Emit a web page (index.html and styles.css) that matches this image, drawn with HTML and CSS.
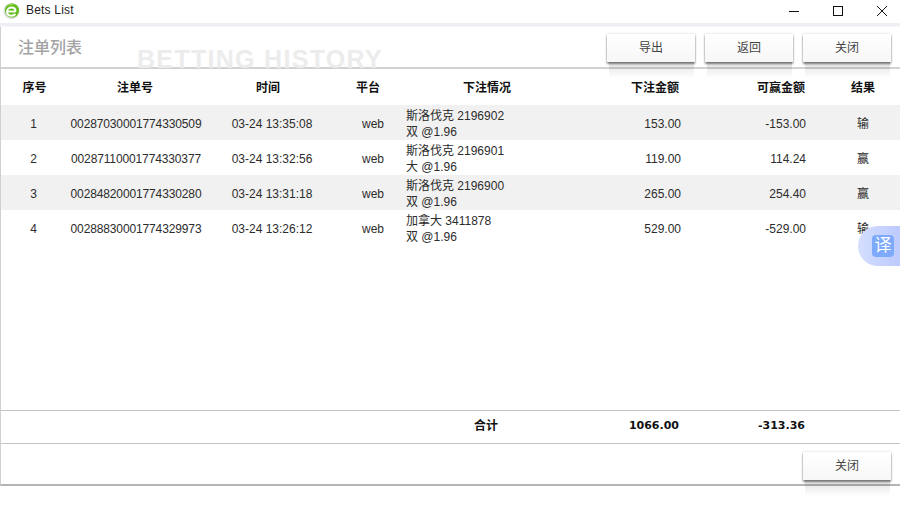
FILE: index.html
```html
<!DOCTYPE html>
<html lang="zh">
<head>
<meta charset="utf-8">
<title>Bets List</title>
<link rel="stylesheet" href="styles.css">
</head>
<body>
<div class="titlebar">
  <svg class="logo" width="17" height="17" viewBox="0 0 17 17">
    <circle cx="8.500" cy="9" r="8" fill="#d9ded6"/>
    <circle cx="9" cy="8.500" r="7" fill="#62bd1a"/>
    <path d="M12 2.500c-1-.6-2-.9-3-.9-2 0-3.700.9-4.800 2.400 2-1 5-1.500 7.800-1.500z" fill="#a8e060"/>
    <path d="M4 9.500h8.800" stroke="#fff" stroke-width="1.800" fill="none"/>
    <path d="M12.500 9.500c0-2.500-1.700-4-3.900-4-2.500 0-4.500 1.800-4.500 4.300 0 2.400 1.900 3.900 4.300 3.900 1.600 0 3-.6 3.900-1.700" stroke="#fff" stroke-width="2" fill="none"/>
  </svg>
  <span class="app-name">Bets List</span>
  <div class="win-controls">
    <svg width="44" height="24" viewBox="0 0 44 24"><path d="M21 11.500h10" stroke="#111" fill="none"/></svg>
    <svg width="44" height="24" viewBox="0 0 44 24"><rect x="21.500" y="6.500" width="9" height="9" stroke="#111" fill="none"/></svg>
    <svg width="44" height="24" viewBox="0 0 44 24"><path d="M21 6l10 10M31 6L21 16" stroke="#111" fill="none"/></svg>
  </div>
</div>
<div class="band"></div>
<main class="panel">
  <header class="panel-head">
    <h1 class="panel-title">注单列表</h1>
    <div class="watermark">BETTING HISTORY</div>
    <div class="actions">
      <button class="btn">导出</button>
      <button class="btn">返回</button>
      <button class="btn">关闭</button>
    </div>
  </header>
  <div class="grid grid-head">
    <div class="c">序号</div>
    <div class="c">注单号</div>
    <div class="c">时间</div>
    <div class="c">平台</div>
    <div class="c">下注情况</div>
    <div class="r">下注金额</div>
    <div class="r">可赢金额</div>
    <div class="c last">结果</div>
  </div>
  <div class="rows">
    <div class="grid row odd">
      <div class="c seq">1</div><div class="c no">00287030001774330509</div><div class="c time">03-24 13:35:08</div><div class="c web">web</div>
      <div class="detail">斯洛伐克 2196902<br>双 @1.96</div>
      <div class="r num">153.00</div><div class="r num win">-153.00</div><div class="c last res">输</div>
    </div>
    <div class="grid row">
      <div class="c seq">2</div><div class="c no">00287110001774330377</div><div class="c time">03-24 13:32:56</div><div class="c web">web</div>
      <div class="detail">斯洛伐克 2196901<br>大 @1.96</div>
      <div class="r num">119.00</div><div class="r num win">114.24</div><div class="c last res">赢</div>
    </div>
    <div class="grid row odd">
      <div class="c seq">3</div><div class="c no">00284820001774330280</div><div class="c time">03-24 13:31:18</div><div class="c web">web</div>
      <div class="detail">斯洛伐克 2196900<br>双 @1.96</div>
      <div class="r num">265.00</div><div class="r num win">254.40</div><div class="c last res">赢</div>
    </div>
    <div class="grid row">
      <div class="c seq">4</div><div class="c no">00288830001774329973</div><div class="c time">03-24 13:26:12</div><div class="c web">web</div>
      <div class="detail">加拿大 3411878<br>双 @1.96</div>
      <div class="r num">529.00</div><div class="r num win">-529.00</div><div class="c last res">输</div>
    </div>
  </div>
  <div class="grid totals">
    <div></div><div></div><div></div><div></div>
    <div class="total-label">合计</div>
    <div class="r total">1066.00</div>
    <div class="r total">-313.36</div>
    <div></div>
  </div>
  <footer class="panel-foot">
    <button class="btn">关闭</button>
  </footer>
</main>
<aside class="translate"><span class="translate-icon">译</span></aside>
</body>
</html>
```
FILE: styles.css
```css
* { box-sizing: border-box; }
html, body { margin: 0; padding: 0; }
body {
  width: 900px;
  height: 516px;
  overflow: hidden;
  position: relative;
  background: #fff;
  color: #333;
  font: 12px/15px "Liberation Sans", "Noto Sans CJK SC", sans-serif;
}
.titlebar {
  height: 23px;
  display: flex;
  align-items: flex-start;
  padding-left: 3px;
  position: relative;
}
.logo { margin-top: 2px; }
.app-name {
  margin: 3px 0 0 6px;
  letter-spacing: 0.2px;
  color: #222;
}
.win-controls {
  margin-left: auto;
  display: flex;
}
.band { height: 4px; background: #eeeef4; border-bottom: 1px solid #f6f6f8; }
.panel {
  height: 459px;
  display: flex;
  flex-direction: column;
  border-left: 1px solid #cfcfcf;
  border-bottom: 2px solid #b4b4b4;
}
.panel-head {
  height: 42px;
  flex: none;
  display: flex;
  align-items: flex-start;
  border-bottom: 2px solid #d2d2d2;
  padding-left: 17px;
  position: relative;
}
.panel-title {
  margin: 11px 0 0;
  font-size: 16px;
  line-height: 20px;
  font-weight: 500;
  color: #a3a3a3;
}
.watermark {
  margin: 20px 0 0 55px;
  font: bold 25px/24px "Liberation Sans", sans-serif;
  color: #ececec;
  letter-spacing: 1.3px;
  white-space: nowrap;
}
.actions {
  margin-left: auto;
  margin-right: 9px;
  margin-top: 7px;
  display: flex;
  gap: 10px;
}
.btn {
  width: 88px;
  height: 28px;
  padding: 0;
  border: 0;
  position: relative;
  background: linear-gradient(#fff, #f7f7f7);
  box-shadow: 0 0 2px rgba(0,0,0,.2), 0 2px 2px rgba(0,0,0,.45);
  font: 12px/28px "Liberation Sans", "Noto Sans CJK SC", sans-serif;
  color: #444;
}
.btn::after {
  content: "";
  position: absolute;
  left: 2px;
  right: 1px;
  top: 100%;
  height: 16px;
  background: linear-gradient(rgba(0,0,0,.12), rgba(0,0,0,0));
  z-index: 1;
}
.grid {
  display: grid;
  grid-template-columns: 67px 134px 132px 68px 170px 110px 126px 92px;
  align-items: center;
}
.grid-head {
  height: 36px;
  flex: none;
  font-weight: bold;
  color: #111;
  padding-top: 3px;
}
.grid-head .r { padding-right: 3px; }
.rows { flex: 1; }
.row {
  height: 35px;
  color: #2c2c2c;
}
.odd { background: #f1f1f1; }
.c { text-align: center; }
.r { text-align: right; }
.last { padding-left: 18px; }
.seq { padding: 3px 2px 0 0; }
.no { padding: 3px 0 0 2px; letter-spacing: -0.13px; }
.time { padding: 3px 0 0 8px; }
.web { padding: 3px 0 0 10px; }
.num { padding: 3px 1px 0 0; }
.win { padding-right: 2px; }
.res { padding-top: 3px; }
.detail { padding: 2px 0 0 4px; line-height: 16px; }
.totals {
  height: 34px;
  flex: none;
  border-top: 1px solid #c4c4c4;
  border-bottom: 1px solid #c4c4c4;
  color: #111;
}
.total-label { font-weight: bold; text-align: center; padding: 0 2px 2px 0; }
.total {
  font: bold 11px/15px "DejaVu Sans", sans-serif;
  padding: 0 3px 3px 0;
}
.panel-foot {
  height: 40px;
  flex: none;
  display: flex;
  justify-content: flex-end;
  padding: 8px 9px 0 0;
}
.translate {
  position: absolute;
  right: 0;
  top: 226px;
  width: 42px;
  height: 40px;
  border-radius: 20px 0 0 20px;
  background: linear-gradient(90deg, #d5defe, #bccafe);
}
.translate-icon {
  position: absolute;
  left: 14px;
  top: 9px;
  width: 22px;
  height: 22px;
  border-radius: 4px;
  background: #7eaafc;
  color: #fff;
  font-size: 17px;
  line-height: 22px;
  text-align: center;
}
```
